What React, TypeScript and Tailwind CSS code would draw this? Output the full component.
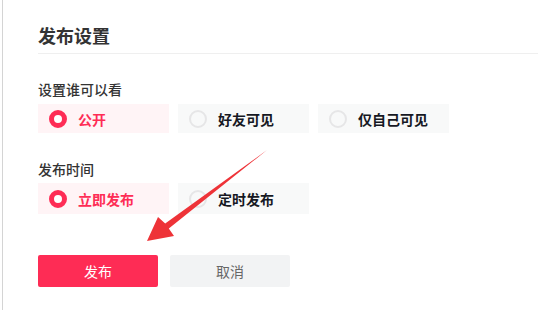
import React from "react";

const font = { fontFamily: '"Noto Sans CJK SC", "Noto Sans", sans-serif' };

function Radio({ checked }: { checked: boolean }) {
  return checked ? (
    <span className="box-border inline-block h-[18px] w-[18px] shrink-0 rounded-full border-[5.5px] border-[#fe2c55] bg-white" />
  ) : (
    <span className="box-border inline-block h-[18px] w-[18px] shrink-0 rounded-full border-2 border-[#e6e6e7] bg-[#f8f9f9]" />
  );
}

function Option({ label, checked, h }: { label: string; checked: boolean; h: string }) {
  return (
    <div
      className={`flex w-[131px] items-center gap-[11px] pl-[11px] ${h} ${
        checked ? "bg-[#fff4f6]" : "bg-[#f8f9f9]"
      }`}
    >
      <Radio checked={checked} />
      <span
        className={`text-[14px] leading-[20px] font-bold ${
          checked ? "text-[#fe2c55]" : "text-[#161823]"
        }`}
      >
        {label}
      </span>
    </div>
  );
}

export default function App() {
  return (
    <div className="relative h-[310px] w-[538px] overflow-hidden bg-white" style={font}>
      <div className="ml-[2px] h-full border-l border-[#d4d4d4] pl-[35px]">
        <div className="border-b border-[#efefef] pt-[23px] pb-[6px]">
          <div className="text-[18px] leading-[24px] font-bold text-[#333]">发布设置</div>
        </div>
        <div className="mt-[25px] text-[14px] leading-[20px] font-medium text-[#333]">设置谁可以看</div>
        <div className="mt-[5px] flex gap-[9px]">
          <Option label="公开" checked h="h-[29px]" />
          <Option label="好友可见" checked={false} h="h-[29px]" />
          <Option label="仅自己可见" checked={false} h="h-[29px]" />
        </div>
        <div className="mt-[26px] text-[14px] leading-[20px] font-medium text-[#333]">发布时间</div>
        <div className="mt-[4px] flex gap-[9px]">
          <Option label="立即发布" checked h="h-[31px]" />
          <Option label="定时发布" checked={false} h="h-[31px]" />
        </div>
        <div className="mt-[41px] flex gap-[12px]">
          <button className="flex h-[32px] w-[120px] items-center justify-center rounded-[2px] bg-[#fe2c55] text-[14px] text-white">
            发布
          </button>
          <button className="flex h-[32px] w-[120px] items-center justify-center rounded-[2px] bg-[#f2f3f4] text-[14px] text-[#666]">
            取消
          </button>
        </div>
      </div>
      <svg
        className="pointer-events-none absolute left-0 top-0"
        width="538"
        height="310"
        viewBox="0 0 538 310"
      >
        <polygon
          points="267,150 168.8,228.4 174,236 147,241 158,217 165.2,223.6"
          fill="#ee3338"
        />
      </svg>
    </div>
  );
}
